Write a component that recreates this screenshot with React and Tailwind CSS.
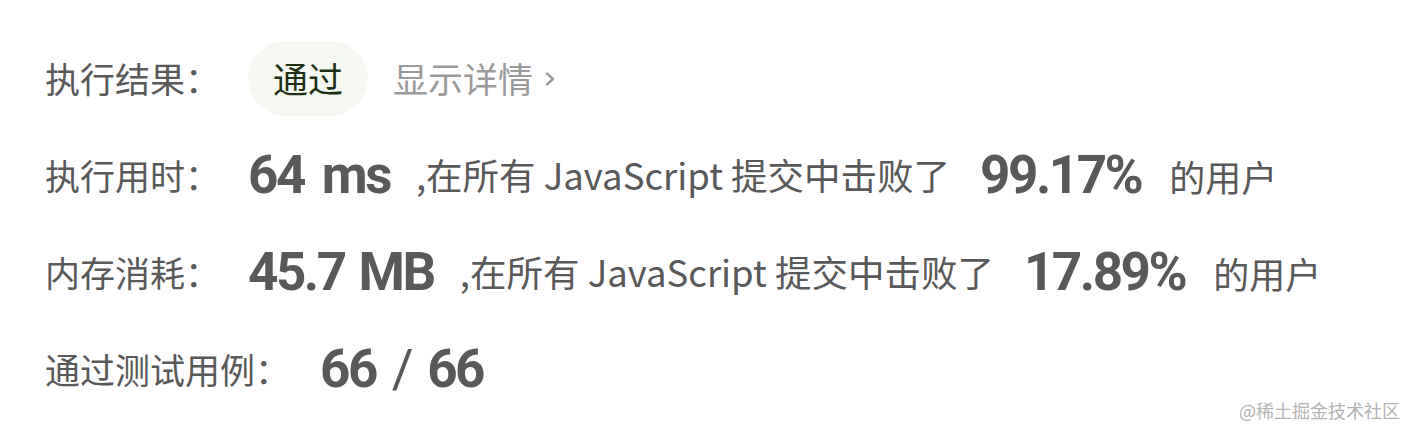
export default function App() {
    const cjk = "font-['Noto_Sans_CJK_SC','Noto_Sans',sans-serif]"
    const num = "font-['Roboto','Liberation_Sans',sans-serif] font-bold text-[53px] tracking-[-2.5px] text-[#595959] leading-none"

    return (
        <div className={`relative w-[1416px] h-[438px] bg-white ${cjk} text-[#595959]`}>
            <div className="flex flex-col pt-[30px] pl-[45px]">

                {/* RESULT */}
                <div className="h-[97px] flex items-center">
                    <span className="text-[35px] w-[203px]">执行结果：</span>
                    <span className="h-[75px] w-[120px] rounded-full bg-[#f5f8f1] flex items-center justify-center text-[35px] text-[#1d3014]">
                        通过
                    </span>
                    <span className="ml-[25px] text-[35px] text-[#9a9a9a] flex items-center">
                        显示详情
                        <svg width="14" height="22" viewBox="0 0 14 22" className="ml-[10px]">
                            <path d="M4 5.5 L10 11 L4 16.5" fill="none" stroke="#9a9a9a" strokeWidth="2.4" strokeLinecap="round" strokeLinejoin="round" />
                        </svg>
                    </span>
                </div>

                {/* RUNTIME */}
                <div className="h-[97px] flex items-center">
                    <span className="text-[35px] w-[203px]">执行用时：</span>
                    <span className={num}>64<span className="ml-[18px]">ms</span></span>
                    <span className="text-[36.5px] ml-[26px]">,在所有 JavaScript 提交中击败了</span>
                    <span className={`${num} ml-[30px]`}>99.17%</span>
                    <span className="text-[36px] ml-[28px]">的用户</span>
                </div>

                {/* MEMORY */}
                <div className="h-[97px] flex items-center">
                    <span className="text-[35px] w-[203px]">内存消耗：</span>
                    <span className={num}>45.7<span className="ml-[14px]">MB</span></span>
                    <span className="text-[36.5px] ml-[26px]">,在所有 JavaScript 提交中击败了</span>
                    <span className={`${num} ml-[30px]`}>17.89%</span>
                    <span className="text-[36px] ml-[28px]">的用户</span>
                </div>

                {/* CASES */}
                <div className="h-[97px] flex items-center">
                    <span className="text-[35px] w-[275px]">通过测试用例：</span>
                    <span className={num}>66<span className="mx-[16px] font-normal">/</span>66</span>
                </div>

            </div>

            <div className="absolute right-[16px] bottom-[14px] text-[18px] text-[#b3b3b3]">
                @稀土掘金技术社区
            </div>
        </div>
    )
}
